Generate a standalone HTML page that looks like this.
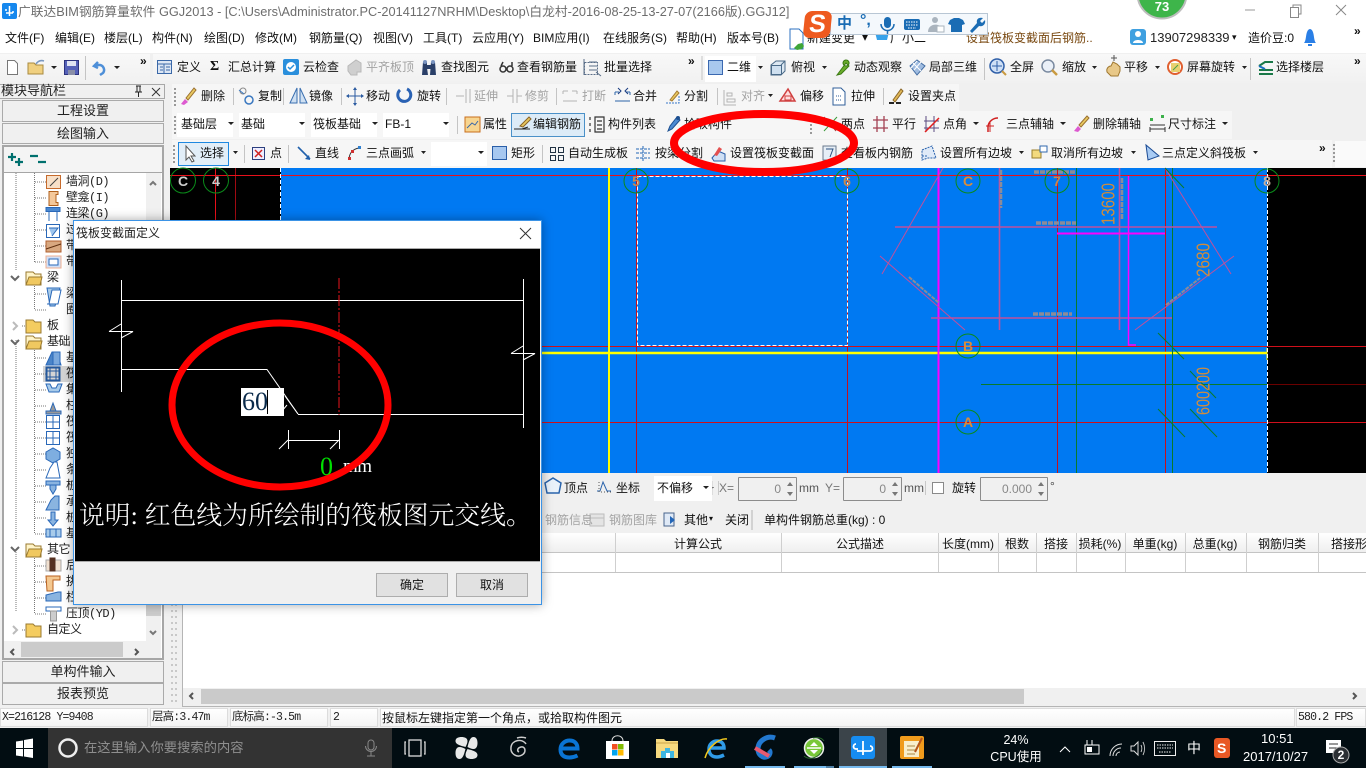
<!DOCTYPE html>
<html lang="zh"><head><meta charset="utf-8"><title>广联达BIM钢筋算量软件</title>
<style>
html,body{margin:0;padding:0;width:1366px;height:768px;overflow:hidden;background:#f0f0f0}
body{position:relative;font-family:"Liberation Sans","Noto Sans CJK SC",sans-serif;font-size:12px;color:#111}
div,span.t{position:absolute}
.t{position:absolute;white-space:nowrap;line-height:16px}
.g{color:#a3a3a3}
.b{position:absolute}
.tr{font-family:"Liberation Mono","Noto Sans CJK SC",monospace;font-size:12px;color:#222;letter-spacing:-.5px}
.st{font-family:"Liberation Mono","Noto Sans CJK SC",monospace;font-size:11.5px;color:#222;top:710px;letter-spacing:-.85px}
.c{transform:translateX(-50%)}
.cell{position:absolute;top:708px;height:19px;background:linear-gradient(#fff,#f4f4f4);border:1px solid #dcdcdc;box-sizing:border-box}
.pb{position:absolute;left:2px;width:162px;box-sizing:border-box;border:1px solid #aaa;background:#f0f0f0;text-align:center;line-height:20px;font-size:13px;color:#222}
.sp{position:absolute;height:24px;top:477px;box-sizing:border-box;border:1px solid #8c8c8c;background:#f0f0f0;border-radius:1px}
.sv{position:absolute;right:15px;top:3px;color:#888;line-height:16px}
.ar{position:absolute;right:3px;width:0;height:0;border-left:3px solid transparent;border-right:3px solid transparent}
.ar.u{top:4px;border-bottom:4px solid #777}.ar.d{bottom:4px;border-top:4px solid #777}
svg{position:absolute;overflow:visible}
</style></head><body>

<!-- title and menu -->
<div class="b" style="left:0;top:0;width:1366px;height:53px;background:#fff"></div>
<div class="t" style="left:18px;top:3px;font-size:12.75px;line-height:18px;color:#6d6d6d">广联达BIM钢筋算量软件 GGJ2013 - [C:\Users\Administrator.PC-20141127NRHM\Desktop\白龙村-2016-08-25-13-27-07(2166版).GGJ12]</div>

<!-- toolbar bands -->
<div class="b" style="left:0;top:54px;width:150px;height:29px;background:linear-gradient(#f8f8f8,#f1f1f1)"></div>
<div class="b" style="left:153px;top:54px;width:550px;height:29px;background:linear-gradient(#f8f8f8,#f1f1f1)"></div>
<div class="b" style="left:703px;top:54px;width:663px;height:29px;background:linear-gradient(#f8f8f8,#f1f1f1)"></div>
<div class="b" style="left:172px;top:84px;width:787px;height:27px;background:#f6f6f6"></div>
<div class="b" style="left:172px;top:111px;width:1060px;height:28px;background:#f6f6f6"></div>
<div class="b" style="left:172px;top:140px;width:1160px;height:28px;background:#f6f6f6"></div>
<div class="b" style="left:705px;top:56px;width:51px;height:26px;background:#fff"></div>
<div class="b" style="left:177px;top:113px;width:56px;height:24px;background:#fff"></div>
<div class="b" style="left:239px;top:113px;width:66px;height:24px;background:#fff"></div>
<div class="b" style="left:311px;top:113px;width:66px;height:24px;background:#fff"></div>
<div class="b" style="left:383px;top:113px;width:66px;height:24px;background:#fff"></div>
<div class="b" style="left:511px;top:113px;width:74px;height:24px;box-sizing:border-box;background:#dcebf7;border:1px solid #4a90c8"></div>
<div class="b" style="left:178px;top:142px;width:51px;height:24px;box-sizing:border-box;background:#e2eef8;border:1px solid #1e88e0"></div>
<div class="b" style="left:431px;top:142px;width:56px;height:24px;background:#fff"></div>
<div class="b" style="left:1335px;top:141px;width:31px;height:26px;background:#fafafa"></div>

<!-- left panel -->
<div class="b" style="left:0;top:84px;width:165px;height:15px;box-sizing:border-box;border:1px solid #a8a8a8;border-left:0;background:#f0f0f0"></div>
<div class="t" style="left:1px;top:83px;font-size:13px;color:#222">模块导航栏</div>
<div class="pb" style="top:100px;height:22px">工程设置</div>
<div class="pb" style="top:123px;height:21px">绘图输入</div>
<div class="b" style="left:2px;top:145px;width:162px;height:515px;box-sizing:border-box;border:2px solid #a6a6a6;background:#fff"></div>
<div class="b" style="left:4px;top:147px;width:158px;height:25px;background:#f4f4f4;border-bottom:1px solid #a6a6a6"></div>
<div class="b" style="left:146px;top:173px;width:15px;height:468px;background:#f0f0f0"></div>
<div class="b" style="left:146px;top:225px;width:15px;height:391px;background:#cdcdcd"></div>
<div class="b" style="left:4px;top:641px;width:157px;height:17px;background:#f0f0f0"></div>
<div class="b" style="left:21px;top:642px;width:102px;height:15px;background:#cbcbcb"></div>
<div class="pb" style="top:661px;height:22px">单构件输入</div>
<div class="pb" style="top:683px;height:22px">报表预览</div>

<div class="t tr" style="left:66px;top:174px">墙洞(D)</div>
<div class="t tr" style="left:66px;top:190px">壁龛(I)</div>
<div class="t tr" style="left:66px;top:206px">连梁(G)</div>
<div class="t tr" style="left:66px;top:222px">过梁</div>
<div class="t tr" style="left:66px;top:238px">带形</div>
<div class="t tr" style="left:66px;top:254px">带形</div>
<div class="t tr" style="left:47px;top:270px">梁</div>
<div class="t tr" style="left:66px;top:286px">梁</div>
<div class="t tr" style="left:66px;top:302px">圈</div>
<div class="t tr" style="left:47px;top:318px">板</div>
<div class="t tr" style="left:47px;top:334px">基础</div>
<div class="b" style="left:43px;top:366px;width:30px;height:16px;background:#d4d4d4"></div>
<div class="t tr" style="left:66px;top:350px">基</div>
<div class="t tr" style="left:66px;top:366px">筏</div>
<div class="t tr" style="left:66px;top:382px">集</div>
<div class="t tr" style="left:66px;top:398px">柱</div>
<div class="t tr" style="left:66px;top:414px">筏</div>
<div class="t tr" style="left:66px;top:430px">筏</div>
<div class="t tr" style="left:66px;top:446px">独</div>
<div class="t tr" style="left:66px;top:462px">条</div>
<div class="t tr" style="left:66px;top:478px">桩</div>
<div class="t tr" style="left:66px;top:494px">承</div>
<div class="t tr" style="left:66px;top:510px">桩</div>
<div class="t tr" style="left:66px;top:526px">基</div>
<div class="t tr" style="left:47px;top:542px">其它</div>
<div class="t tr" style="left:66px;top:558px">后</div>
<div class="t tr" style="left:66px;top:574px">挑</div>
<div class="t tr" style="left:66px;top:590px">栏</div>
<div class="t tr" style="left:66px;top:606px">压顶(YD)</div>
<div class="t tr" style="left:47px;top:622px">自定义</div>

<!-- splitter and lower area -->
<div class="b" style="left:183px;top:533px;width:1183px;height:155px;background:#fff"></div>
<div class="b" style="left:183px;top:533px;width:1183px;height:20px;background:linear-gradient(#fff,#efefef);border-bottom:1px solid #c4c4c4;box-sizing:border-box"></div>
<div class="b" style="left:183px;top:572px;width:1183px;height:1px;background:#c4c4c4"></div>
<div class="b" style="left:183px;top:688px;width:1183px;height:17px;background:#f0f0f0"></div>
<div class="b" style="left:201px;top:689px;width:823px;height:15px;background:#cacaca"></div>
<div class="b" style="left:183px;top:706px;width:1183px;height:1px;background:#b5b5b5"></div>
<div class="b" style="left:182px;top:533px;width:1px;height:174px;background:#b5b5b5"></div>
<div class="cell" style="left:0;width:148px"></div><div class="cell" style="left:150px;width:78px"></div><div class="cell" style="left:230px;width:98px"></div><div class="cell" style="left:330px;width:48px"></div><div class="cell" style="left:380px;width:915px"></div><div class="cell" style="left:1296px;width:70px"></div>

<!-- taskbar -->
<div class="b" style="left:0;top:728px;width:1366px;height:40px;background:#020d12"></div>
<div class="b" style="left:48px;top:728px;width:344px;height:40px;background:#333"></div>
<div class="b" style="left:839px;top:728px;width:48px;height:40px;background:#3b444a"></div>
<div class="b" style="left:745px;top:766px;width:40px;height:2px;background:#76b9ed"></div>
<div class="b" style="left:794px;top:766px;width:32px;height:2px;background:#76b9ed"></div>
<div class="b" style="left:826px;top:766px;width:8px;height:2px;background:#4f80a6"></div>
<div class="b" style="left:839px;top:766px;width:48px;height:2px;background:#76b9ed"></div>
<div class="b" style="left:892px;top:766px;width:40px;height:2px;background:#76b9ed"></div>

<!-- canvas and icons -->
<svg width="1366" height="768" style="left:0;top:0" viewBox="0 0 1366 768">
<rect x="170" y="168" width="1196" height="305" fill="#000"/>
<rect x="281" y="168" width="986" height="305" fill="#0079f2"/>
<g fill="none" stroke-width="1">
<path d="M215.500 168V473" stroke="#e8101a"/>
<path d="M235.500 168V473" stroke="#a00a12"/>
<path d="M636.500 168V473M847.500 168V473M1057.500 168V473M1165.500 168V473" stroke="#c80f1a"/>
<path d="M170 175.500H1366" stroke="#e8101a"/>
<path d="M170 346.500H1366M170 422.500H1366" stroke="#d0101a"/>
<path d="M609 168V473" stroke="#ff0" stroke-width="2"/><path d="M282 353H1267" stroke="#ff0" stroke-width="2.400"/><path d="M1267 348V360" stroke="#ff0"/>
<path d="M938.500 168V473" stroke="#f0f" stroke-width="2"/>
<path d="M1076.500 168V473M1172.500 168V473M981 384.500H1267" stroke="#0a7a2a"/><path d="M1267 384.500H1366" stroke="#6a0000"/>
<path d="M637.500 176.500H847.500V345.500H637.500Z M280.500 168V473M1267.500 168V473" stroke="#fff" stroke-dasharray="4 2"/>
<path d="M895 227H1217M931 318H1172M999.500 168V330M1119.500 168V330" stroke="#c0509c" stroke-width="1.600"/>
<path d="M943 168L882 274M1165 168L1231 274M880 256L965 330M1234 256L1135 330" stroke="#c0509c"/>
<path d="M1057 233.500H1165" stroke="#f0f" stroke-width="2"/><path d="M1128.500 176V345H1136" stroke="#f0f" stroke-width="1.500"/>
<path d="M1165 168L1184 188M1158 333L1184 359M1190 371L1216 398M1158 409L1185 437M1190 409L1217 437" stroke="#0a7a2a"/>
<path d="M1034 172H1076M1036 223H1076M1033 314H1072" stroke="#8b8b98" stroke-width="3.500" stroke-dasharray="5 1"/>
<path d="M1001 170V208M1122 178V220" stroke="#8b8b98" stroke-width="2.500" stroke-dasharray="5 1"/>
<path d="M909 277L939 303M1166 305L1200 278" stroke="#8b8b98" stroke-width="2" stroke-dasharray="4 1"/>
<g stroke="#0a8a1a"><circle cx="183" cy="180.500" r="12.500"/><circle cx="216" cy="180.500" r="12.500"/><circle cx="636" cy="181" r="12"/><circle cx="847" cy="181" r="12"/><circle cx="968" cy="181" r="12"/><circle cx="1057" cy="181" r="12"/><circle cx="1267" cy="181" r="12"/><circle cx="968" cy="346" r="12"/><circle cx="968" cy="422" r="12"/></g>
</g>
<g font-family="Liberation Sans" font-size="14" font-weight="bold" text-anchor="middle"><text x="183" y="186" fill="#ccc">C</text><text x="216" y="186" fill="#ccc">4</text><text x="636" y="186" fill="#c88850">5</text><text x="847" y="186" fill="#c88850">6</text><text x="968" y="186" fill="#d88c3c">C</text><text x="1057" y="186" fill="#c88850">7</text><text x="1267" y="186" fill="#c8b0a0">8</text><text x="968" y="351" fill="#d88c3c">B</text><text x="968" y="427" fill="#d88c3c">A</text></g>
<g font-family="Liberation Sans" font-size="18" fill="#d08c3c" text-anchor="middle"><text transform="translate(1114.500,204) rotate(-90)" textLength="42" lengthAdjust="spacingAndGlyphs">13600</text><text transform="translate(1209.500,260) rotate(-90)" textLength="34" lengthAdjust="spacingAndGlyphs">2680</text><text transform="translate(1209.500,391) rotate(-90)" textLength="48" lengthAdjust="spacingAndGlyphs">600200</text></g>

<!-- splitter dots -->
<path d="M172 400V704M176 400V704" stroke="#c8c8c8" stroke-width="2" stroke-dasharray="2 4" fill="none"/>

<!-- left panel icons -->
<path d="M136 86h5M137 86v6M140 86v6M135 92h7M138.500 92v5" stroke="#222" fill="none"/>
<path d="M152 88l8 8M160 88l-8 8" stroke="#333" fill="none"/>
<g stroke="#00706e" stroke-width="2.200" fill="none"><path d="M8 157h8M12 153v8M15 162h8M19 158v8M30 156h8M38 162h8"/></g>
<g stroke="#777" fill="none" stroke-dasharray="1 1"><path d="M16 173V270M16 340V540M16 550V612M34.500 173V262M34.500 286V310M34.500 350V534M34.500 558V614"/>
<path d="M35 182h11M35 198h11M35 214h11M35 230h11M35 246h11M35 262h11M35 294h11M35 310h11M35 358h11M35 374h11M35 390h11M35 406h11M35 422h11M35 438h11M35 454h11M35 470h11M35 486h11M35 502h11M35 518h11M35 534h11M35 566h11M35 582h11M35 598h11M35 614h11M22 326h4M22 630h4"/></g>
<g fill="none" stroke="#666" stroke-width="2"><path d="M11 276l4 4 4-4M11 340l4 4 4-4M11 547l4 4 4-4"/></g>
<g fill="none" stroke="#bbb" stroke-width="2"><path d="M13 322l4 4-4 4M13 626l4 4-4 4"/></g>
<g stroke="#9a7a30">
<path d="M26 272h7l2 2h6v11H26z M26 336h7l2 2h6v11H26z M26 544h7l2 2h6v11H26z" fill="#fff4c8"/><path d="M26 285l3-8h13l-2 8z M26 349l3-8h13l-2 8z M26 557l3-8h13l-2 8z" fill="#f0c860"/>
<path d="M26 320h7l2 2h6v11H26z M26 624h7l2 2h6v11H26z" fill="#f4cc60"/>
</g>
<!-- tree icons -->
<g fill="#fff" stroke="#2a68b8">
<rect x="46.500" y="175.500" width="14" height="13" stroke="#c66a2c" fill="#f8e0c8"/><path d="M50 186l8-8" stroke="#444"/>
<path d="M49 191.500h9v3h-2v8h2v3h-9z" stroke="#b0601c" fill="#f4c89a"/>
<path d="M46 207.500h14v4H46zM49 211v10M57 211v10" stroke="#2a68b8" fill="#4a88d0"/>
<path d="M46.500 224.500h13v13h-13z"/><path d="M49 228h9l-6 8" fill="#9cc4ee"/>
<rect x="46" y="241" width="15" height="11" stroke="#b06030" fill="#d8a880"/><path d="M46 249l15-5" stroke="#603010"/>
<rect x="46" y="256" width="15" height="12" stroke="#f0b090" fill="#d0e0f8"/><rect x="49" y="259" width="9" height="6"/>
<path d="M47 288h13l-5 18h-5z" fill="#a8cbea"/>
<path d="M49 304l3-14h9l-3 14z M47 304h11"/>
<path d="M46 365l6-13h5l4 13z" fill="#4a84c8"/><rect x="53" y="352" width="7" height="13" fill="#7aa8dc"/>
<rect x="46.500" y="367.500" width="13" height="13" fill="none" stroke="#24589c" stroke-width="2"/><path d="M46 371h14M46 377h14M50 367v14M56 367v14" stroke="#24589c"/>
<path d="M46 384h4l2 4h4l2-4h4l-3 8h-10z" fill="#a8cbea"/>
<path d="M46 411h15v3H46z M50 411l3-8 3 8z" fill="#999"/>
<rect x="46.500" y="415.500" width="13" height="13"/><path d="M46 422h14M53 415v14"/>
<rect x="46.500" y="431.500" width="13" height="13"/><path d="M46 438h14M53 431v14"/>
<path d="M46 452l7-4 7 4v7l-7 4-7-4z" fill="#7eaee0"/>
<path d="M46 478l4-10 4-6h3l3 16z"/>
<path d="M46 481h14v4H46zM50 485h6v4l-3 5-3-5z" fill="#8ab4e0"/>
<path d="M46 510l5-10 4-4h4v14z" fill="#8ab4e0"/>
<path d="M51 512h4v8h3l-5 6-5-6h3z" fill="#8ab4e0"/>
<path d="M46 529h15v8H46zM50 529v8M56 529v8" fill="#a8cbea"/>
<rect x="46" y="560" width="15" height="11" fill="#f0e0d0" stroke="#aaa"/><rect x="50" y="558" width="5" height="13" fill="#553020" stroke="#553020"/>
<path d="M46 576h14v4h-7v11h-6z" fill="#f4c890" stroke="#b86020"/>
<path d="M46 595l12-3h3v9H46z" fill="#8ab4e0"/>
<path d="M46 607h15v4H46z"/><rect x="50.500" y="611" width="6" height="10" fill="#ccc" stroke="#999"/>
</g>
<g fill="none" stroke="#777" stroke-width="2"><path d="M150 185l3-3 3 3M150 631l3 3 3-3"/><path d="M14 649l-3 3 3 3M135 649l3 3-3 3M193 693l-3 3 3 3M1353 693l3 3-3 3" stroke="#555"/></g>

<!-- row 1 icons -->
<path d="M7.500 60.500h7l3 3v11h-10z" fill="#fff" stroke="#777"/>
<path d="M28 63h6l2 2h7v9H28z" fill="#f0d080" stroke="#a88a40"/><path d="M36 64c2-3 5-4 8-3" fill="none" stroke="#7a98c0" stroke-width="1.500"/>
<rect x="64.500" y="60.500" width="14" height="14" fill="#5561b8" stroke="#2c327e"/><rect x="67" y="61" width="9" height="5" fill="#dfe3f2"/><rect x="68" y="70" width="7" height="5" fill="#8a8fa8"/>
<path d="M98 62l-4 4 4 2M95 65h5a5 5 0 0 1 3 8l-3 2" fill="none" stroke="#4e8fd8" stroke-width="2.500"/>
<g fill="#222"><path d="M51 66h6l-3 3zM114 66h6l-3 3zM758 66h5l-2.500 3zM822 66h5l-2.500 3zM1092 66h5l-2.500 3zM1155 66h5l-2.500 3zM1242 66h5l-2.500 3zM768 94h5l-2.500 3zM228 122h6l-3 3zM299 122h6l-3 3zM372 122h6l-3 3zM443 122h6l-3 3zM973 122h6l-3 3zM1060 122h6l-3 3zM1222 122h6l-3 3zM233 151h5l-2.500 3zM421 151h5l-2.500 3zM478 151h6l-3 3zM1019 151h5l-2.500 3zM1131 151h5l-2.500 3zM1253 151h5l-2.500 3zM708 487h6l-3 3"/></g>
<g stroke="#c4c4c4"><path d="M85.500 56v24M702 56v24M984.500 58v22M1250.500 58v22M233.500 88v17M283.500 88v17M341.500 88v17M446.500 88v17M556.500 88v17M717.500 88v17M883.500 88v17M457.500 116v18M244.500 145v18M288.500 145v18M542.500 145v18"/></g>
<g fill="none" stroke="#999" stroke-dasharray="2 2" stroke-width="2"><path d="M175 88V106M175 116V134M174 145V163M811 116V134M1334 144V164M660 482V500"/></g>
<rect x="157.500" y="60.500" width="14" height="13" fill="#dce6f4" stroke="#3a68a8"/><path d="M157 64h15M164 64v10M160 67h3M160 70h3M166 67h4M166 70h4" stroke="#3a68a8" fill="none"/>
<rect x="283" y="59" width="16" height="16" rx="2" fill="#2a8fdc"/><circle cx="291" cy="67" r="5" fill="#fff"/><path d="M288 67l2 2 4-4" stroke="#2a8fdc" fill="none" stroke-width="1.500"/>
<path d="M348 66l8-6 5 3v9h-4v3h-6l-3-4z" fill="#cfcfcf" stroke="#b8b8b8"/>
<path d="M423 62h4v6l1 7h-6zM431 62h4l1 13h-6zM427 65h4v4h-4z" fill="#2a3f68"/><circle cx="425" cy="62" r="2" fill="#7a94c0"/><circle cx="433" cy="62" r="2" fill="#7a94c0"/>
<g fill="none" stroke="#333" stroke-width="1.500"><circle cx="503" cy="69" r="3"/><circle cx="510" cy="69" r="3"/><path d="M501 66l2-4M512 66v-4"/></g>
<g fill="none" stroke="#5a6e88"><rect x="584.500" y="62.500" width="13" height="12" stroke-dasharray="2 1"/><path d="M584 59v16M589 62h8M589 66h8M589 70h8M596 72l5 4"/></g>
<rect x="708.500" y="60.500" width="14" height="14" fill="#a8c8ee" stroke="#3a68b0"/>
<path d="M771 65l5-4h9v10l-4 4h-10z" fill="#dde8f2" stroke="#4a6a88"/><rect x="771.500" y="65.500" width="10" height="9" fill="#cfe0f0" stroke="#4a6a88"/><path d="M781 65l4-4" stroke="#4a6a88"/>
<path d="M837 75l3-4 6-8 3 3-8 8zM846 60a3 3 0 1 0 .1 0" fill="#6cae2c" stroke="#3c7a14"/>
<path d="M910 66l7-6 8 6-8 9z" fill="#a0bce0" stroke="#446ea4"/><path d="M913 63l8 8M917 61l-6 7M921 62l-7 8" stroke="#fff" fill="none"/>
<circle cx="997" cy="66" r="7" fill="#cfe0f6" stroke="#2f5fa8" stroke-width="1.500"/><path d="M997 61v10M992 66h10" stroke="#2f5fa8"/><path d="M1002 71l4 4" stroke="#c99a40" stroke-width="2"/>
<circle cx="1048" cy="66" r="6" fill="#eaf0f8" stroke="#7a8aa0" stroke-width="1.500"/><path d="M1052 70l5 5" stroke="#c99a40" stroke-width="2.500"/>
<path d="M1107 72c-1-4 2-6 4-6l2-4 4 2 3 3v4l-2 5h-7z" fill="#e8c888" stroke="#a07830"/><path d="M1114 55v6M1111 58h6" stroke="#555" fill="none"/>
<circle cx="1175" cy="67" r="7" fill="#fff" stroke="#e06030" stroke-width="2"/><rect x="1171" y="63" width="9" height="9" fill="#e8d070"/><path d="M1173 70l5-5" stroke="#48a048"/>
<path d="M1259 66l6-4h8M1259 70h14M1259 74h14" stroke="#1a7848" stroke-width="2" fill="none"/><path d="M1259 66l6 3" stroke="#1a6ec0" stroke-width="2"/>

<!-- menu icons -->
<path d="M790 29h9l4 4v16h-13z" fill="#fff" stroke="#2c70c0"/><path d="M798 44l-4 4 3 2 5-1 2-3-2-3z" fill="#3fa63a"/>
<path d="M875 32h14l-2 8h-10z" fill="#37a2ea"/>
<rect x="1130" y="29" width="16" height="16" rx="3" fill="#3fa0e0"/><circle cx="1138" cy="34" r="3" fill="#fff"/><path d="M1133 43c0-4 10-4 10 0z" fill="#fff"/>
<path d="M1304 43c3-3 1-13 6-14 5 1 3 11 6 14z M1308 44h4v2h-4z" fill="#2a7fe6"/>

<!-- row 2 icons -->
<path d="M181 104l4-5 3 3-4 3z" fill="#dd5ad0"/><path d="M186 98l8-10 2 2-8 10z" fill="#e8c860" stroke="#9a7030"/>
<circle cx="243" cy="91" r="3" fill="none" stroke="#888"/><circle cx="249" cy="100" r="4" fill="none" stroke="#3a78c0" stroke-width="1.500"/><path d="M239 90l5 4" stroke="#3a78c0"/>
<path d="M297 88l-7 15h7z M300 88l7 15h-7z" fill="#cfe0f2" stroke="#3a6fb0"/>
<path d="M355 88v17M347 96h16" stroke="#2a5aa0" fill="none"/><path d="M355 87l-2 3h4zM355 106l-2-3h4zM346 96l3-2v4zM364 96l-3-2v4z" fill="#2a5aa0"/>
<path d="M400 90a6.500 6.500 0 1 0 7-1" fill="none" stroke="#2a62b4" stroke-width="3"/>
<g stroke="#b4b4b4" fill="none"><path d="M456 96h8M466 89v14M470 89v14"/><path d="M507 96h6M517 96h5M513 89v14M517 89v14"/><path d="M563 91h5M572 91h5M563 101h14M563 91v3M577 91v3"/><path d="M724 90v15h12M727 93h5v3h-5zM727 99h8v3h-8z"/></g>
<g stroke="#2c64a8" fill="none"><path d="M615 92h4M626 92h4M615 101h15M615 92v3M630 92v3" /><path d="M618 88l3 3-3 3M628 88l-3 3 3 3" stroke="#1a3c80"/></g>
<path d="M666 103h13v-7" fill="none" stroke="#3a78c8" stroke-dasharray="2 1"/><path d="M670 100l7-9 2 2-7 8z" fill="#e8c860" stroke="#a47a30"/>
<path d="M788 89l7 12h-15z" fill="#fdd" stroke="#d04040" stroke-width="1.500"/><rect x="785" y="96" width="6" height="4" fill="none" stroke="#d04040"/>
<path d="M833 88h8l4 4v13h-12z" fill="#fff" stroke="#305f99"/><path d="M836 96h6M836 100h6" stroke="#305f99" stroke-dasharray="1 1"/>
<path d="M889 103h5M896 103h5" stroke="#222" stroke-width="2"/><path d="M893 100l8-11 2 2-8 11z" fill="#e0b858" stroke="#8a6628"/>

<!-- row 3 icons -->
<rect x="465" y="117" width="15" height="15" fill="#f7d590" stroke="#c86e1c"/><path d="M467 128l5-5 3 2 3-4" stroke="#3a68a8" fill="none"/>
<path d="M514 129h8l6-2M515 129h15" stroke="#222" fill="none"/><path d="M520 126l9-9 2 2-8 8z" fill="#e8c860" stroke="#8a6428"/>
<path d="M590 117v3M590 123v3M590 129v3M595 117h9v15h-9zM597 121h5M597 125h5M597 129h5" stroke="#333" fill="none" stroke-width="1.200"/>
<path d="M668 131l2-5 7-9 3 3-8 9z" fill="#4b8ad2" stroke="#1c4f90"/><circle cx="678" cy="118" r="2" fill="#1c4f90"/>
<path d="M824 131l13-14" stroke="#3a9a3a"/><path d="M824 117l12 14" stroke="#a34040"/>
<path d="M873 120h15M873 128h15M877 116v16M884 116v16" stroke="#a34052" fill="none" stroke-width="1.300"/>
<path d="M926 116v16M934 116v16M924 121h15M924 128h15" stroke="#5a4a80" fill="none"/><path d="M925 132l14-14" stroke="#e02020" stroke-width="1.500"/>
<path d="M988 132v-6a10 10 0 0 1 10-8" stroke="#d02020" fill="none" stroke-width="1.500"/><path d="M986 126h8M990 122v10" stroke="#d02020"/>
<path d="M1074 131l4-5 3 3-3 3z" fill="#dd5ad0"/><path d="M1079 125l8-9 2 2-8 9z" fill="#e8c860" stroke="#9a7030"/>
<path d="M1150 125h15M1150 129h15M1150 127v5M1165 127v5" stroke="#333" fill="none"/><rect x="1150" y="118" width="3" height="3" fill="#3cb04a"/><rect x="1161" y="115" width="3" height="3" fill="#3cb04a"/>

<!-- row 4 icons -->
<path d="M186 146v14l3-3 3 5 2-1-3-5h4z" fill="#fff" stroke="#555"/>
<rect x="252.500" y="147.500" width="12" height="12" fill="#eef" stroke="#2c3f7f"/><path d="M255 150l7 7M262 150l-7 7" stroke="#d02020" stroke-width="1.500"/>
<path d="M298 147l12 12" stroke="#2160ac" stroke-width="1.600"/><path d="M310 160l-5-1 4-4z" fill="#2160ac"/>
<path d="M349 160c0-7 4-11 10-12" stroke="#333" fill="none"/><rect x="348" y="157" width="3" height="3" fill="#d03030"/><rect x="358" y="146" width="3" height="3" fill="#3080d0"/><rect x="351" y="150" width="3" height="3" fill="#d03030"/>
<rect x="492.500" y="146.500" width="14" height="13" fill="#a7c8f0" stroke="#2a5ea8"/>
<g fill="none" stroke="#234"><rect x="550.500" y="147.500" width="5" height="5"/><rect x="558.500" y="147.500" width="5" height="5"/><rect x="550.500" y="155.500" width="5" height="5"/><rect x="558.500" y="155.500" width="5" height="5"/></g>
<path d="M636 149h14M636 153h14M636 158h14M643 146v15" stroke="#2166b6" fill="none" stroke-dasharray="3 1"/>
<path d="M712 158l6-7 7 3v7h-11z" fill="#cfe0f5" stroke="#2a5ea8"/><path d="M714 155l5-8 3 2-5 7z" fill="#e45050"/>
<rect x="823" y="146" width="13" height="14" fill="#e6eef6" stroke="#6a7a8e"/><path d="M826 149h7l-3 8" stroke="#2a5080" fill="none"/>
<path d="M922 150l10-4 4 12h-8l-6 2zM922 156h6" fill="#dfeaf8" stroke="#2a62ac" stroke-dasharray="2 1"/>
<path d="M1032 150h9v8h-9z" fill="#f3da7e" stroke="#9a7f2c"/><path d="M1040 146h7v6h-7z" fill="#fff" stroke="#3268ad"/>
<path d="M1146 145l2 15 11-4z" fill="#a8cbf4" stroke="#1b4b94"/>

<!-- bottom row icons -->
<path d="M545 483l8-5 8 5-2 10h-12z" fill="#eaf2fa" stroke="#2a64ac" stroke-width="1.500"/>
<path d="M597 491h3l3-9 4 9h4" stroke="#2a64ac" fill="none"/><path d="M599 482v10h13" stroke="#555" fill="none" stroke-dasharray="1 2"/>
<rect x="932.500" y="482.500" width="11" height="11" fill="#fff" stroke="#8a8a8a"/>
<path d="M590 514h14v12h-14zM590 518h14" fill="#e4e4e4" stroke="#bdbdbd"/>
<path d="M664 513h10v13h-10z" fill="#dfe9f6" stroke="#47648c"/><path d="M670 516l5 4-5 4z" fill="#2266b8"/>
<path d="M752 510v20" stroke="#b5b5b5"/>
<g stroke="#c8c8c8"><path d="M712 481v14M718.500 481v14M925.500 481v14"/></g>

<!-- table lines -->
<path d="M615.500 533V572M781.500 533V572M938.500 533V572M998.500 533V572M1036.500 533V572M1076.500 533V572M1125.500 533V572M1185.500 533V572M1246.500 533V572M1318.500 533V572" stroke="#cfcfcf"/>

<!-- task bar icons -->
<path d="M16 741.500l7-1V748h-7zM24 740l9-1.500V748h-9zM16 749h7v7.500l-7-1zM24 749h9v9l-9-1.500z" fill="#fff"/>
<circle cx="68" cy="748" r="8.500" fill="none" stroke="#eee" stroke-width="2.500"/>
<g fill="none" stroke="#888"><rect x="368" y="740" width="6" height="10" rx="3"/><path d="M365.500 746a5.500 5.500 0 0 0 11 0M371 752v4M367 756h8"/></g>
<g fill="none" stroke="#ddd" stroke-width="1.300"><rect x="409" y="740" width="12" height="16"/><path d="M406 742h-1v12h1M424 742h1v12h-1"/></g>
<g fill="#e8e8e8"><path id="bl" d="M465.500 747c-3-1-10-2-10-6 0-3 3-4 6-4 3 0 6 1 6 4 0 2-1 4-2 6z"/><path d="M467.500 747c1-3 2-10 6-10 3 0 4 3 4 6 0 3-1 6-4 6-2 0-4-1-6-2z"/><path d="M467.500 749c3 1 10 2 10 6 0 3-3 4-6 4-3 0-6-1-6-4 0-2 1-4 2-6z"/><path d="M465.500 749c-1 3-2 10-6 10-3 0-4-3-4-6 0-3 1-6 4-6 2 0 4 1 6 2z"/></g>
<path d="M526 744c-4-6-14-4-15 3s6 11 11 8 3-9-1-8-4 4-2 5M517 738c3-1 6-1 9 0" fill="none" stroke="#cdcdcd" stroke-width="1.500"/>
<path d="M560.500 748.500h17c0-6-4-8-8-8s-9 3-9 9 4 8 9 8c3 0 6-1 8-2" fill="none" stroke="#0a74d4" stroke-width="4"/>
<rect x="606" y="741" width="23" height="18" fill="#fff"/><path d="M612 741c0-7 11-7 11 0" stroke="#ddd" fill="none"/><rect x="612" y="744" width="5.500" height="5.500" fill="#f25022"/><rect x="618" y="744" width="5.500" height="5.500" fill="#7fba00"/><rect x="612" y="750" width="5.500" height="5.500" fill="#00a4ef"/><rect x="618" y="750" width="5.500" height="5.500" fill="#ffb900"/>
<path d="M656 739h8l2 2h12v17h-22z" fill="#f6d97f"/><path d="M656 743h22" stroke="#caa44a"/><path d="M661 758v-7h4v-3h5v3h4v7z" fill="#3fb5e0"/><rect x="666" y="753" width="4" height="5" fill="#fff"/>
<path d="M708.500 748h15.500c0-5-3-7-7-7s-8 3-8 8 3 8 8 8c3 0 5-1 7-2" fill="none" stroke="#2f9be8" stroke-width="3.500"/><path d="M705 758c3-11 14-20 22-19" fill="none" stroke="#f2c81f" stroke-width="1.500"/>
<path d="M775 738c-8-3-17 3-17 11 0 6 5 9 8 8 4-1 5-5 3-7" fill="none" stroke="#2278cf" stroke-width="5"/><path d="M755 748l14 8" stroke="#e85a70" stroke-width="4"/>
<circle cx="814" cy="748" r="9.500" fill="#79c83a" stroke="#eee" stroke-width="1.500"/><path d="M807 748h14" stroke="#fff" stroke-width="1.500"/><path d="M810 746l4-4 4 4zM810 750l4 4 4-4z" fill="#fff"/><path d="M804 756c6 5 16 1 18-6M813 738c5-1 9 0 11 3" fill="none" stroke="#2a6a2a"/>
<rect x="851" y="736" width="24" height="23" rx="3" fill="#168cf0"/><path d="M863 741v14M858 749h-2a2.500 2.500 0 0 1 0-5M868 751h2a2.500 2.500 0 0 0 0-5M857 751h12" stroke="#fff" stroke-width="1.800" fill="none"/>
<rect x="900" y="736" width="24" height="23" rx="2" fill="#f09b1c"/><rect x="904" y="741" width="15" height="16" fill="#f8eecc"/><path d="M907 746h8M907 750h8M907 754h8" stroke="#aa8844"/><path d="M915 752l7-14" stroke="#b6561a" stroke-width="2"/>
<path d="M1060 752l5-5 5 5" stroke="#fff" fill="none"/>
<rect x="1085" y="745" width="14" height="9" fill="none" stroke="#fff"/><rect x="1087" y="747" width="5" height="5" fill="#fff"/><path d="M1087 745v-5M1092 745v-5" stroke="#fff"/>
<path d="M1110 756a12 12 0 0 1 12-12M1113 756a8 8 0 0 1 8-8M1116 756a4 4 0 0 1 4-4" stroke="#ddd" fill="none"/>
<path d="M1131 746h3l4-4v13l-4-4h-3z" fill="none" stroke="#ddd"/><path d="M1141 745c1 2 1 5 0 7M1143 742c2 4 2 9 0 13" stroke="#ccc" fill="none"/>
<rect x="1154.500" y="741.500" width="21" height="14" fill="none" stroke="#eee"/><path d="M1157 745h16M1157 748h16M1159 752h12" stroke="#eee" stroke-dasharray="1.500 1"/>
<rect x="1214" y="738" width="16" height="20" rx="3" fill="#e85825"/>
<path d="M1326 740h15v13h-15z" fill="#fff"/><path d="M1329 744h9M1329 748h9" stroke="#333"/>
<circle cx="1341" cy="755" r="8" fill="#2b2f33" stroke="#aaa"/>

<!-- top right -->
<circle cx="1162" cy="-6" r="24.500" fill="#3eb54a" stroke="#bdbdbd" stroke-width="2"/>
<path d="M1245 10h10" stroke="#999"/><path d="M1290.500 7.500h8v10h-8zM1293 7V5h8v9h-2" fill="none" stroke="#888"/><path d="M1336 5l10 10M1346 5l-10 10" stroke="#888" fill="none"/>

<!-- title app icon -->
<rect x="2" y="3" width="15" height="16" rx="2" fill="#1688ee"/><path d="M9.500 6v10M5 10h2M12 12h2M6 13h7" stroke="#fff" stroke-width="1.500" fill="none"/>
</svg>

<!-- top toolbar texts -->
<div class="t" style="left:5px;top:30px">文件(F)</div><div class="t" style="left:55px;top:30px">编辑(E)</div><div class="t" style="left:104px;top:30px">楼层(L)</div><div class="t" style="left:152px;top:30px">构件(N)</div><div class="t" style="left:204px;top:30px">绘图(D)</div><div class="t" style="left:255px;top:30px">修改(M)</div><div class="t" style="left:309px;top:30px">钢筋量(Q)</div><div class="t" style="left:373px;top:30px">视图(V)</div><div class="t" style="left:423px;top:30px">工具(T)</div><div class="t" style="left:472px;top:30px">云应用(Y)</div><div class="t" style="left:533px;top:30px">BIM应用(I)</div><div class="t" style="left:603px;top:30px">在线服务(S)</div><div class="t" style="left:676px;top:30px">帮助(H)</div><div class="t" style="left:727px;top:30px">版本号(B)</div>
<div class="t" style="left:807px;top:30px">新建变更</div><div class="t" style="left:862px;top:29px">▾</div><div class="t" style="left:890px;top:30px">广小二</div>
<div class="t" style="left:966px;top:30px;color:#7a4a12">设置筏板变截面后钢筋..</div>
<div class="t" style="left:1150px;top:30px;font-size:13px;color:#222">13907298339</div><div class="t" style="left:1232px;top:29px;font-size:9px">▾</div><div class="t" style="left:1248px;top:30px">造价豆:0</div>
<div class="t" style="left:1354px;top:23px;font-weight:bold">»</div><div class="t" style="left:140px;top:53px;font-weight:bold">»</div><div class="t" style="left:688px;top:53px;font-weight:bold">»</div><div class="t" style="left:1354px;top:53px;font-weight:bold">»</div><div class="t" style="left:1319px;top:140px;font-weight:bold">»</div>

<div class="t" style="left:177px;top:59px">定义</div><div class="t" style="left:210px;top:59px;font:bold 14px/16px 'Liberation Serif',serif">Σ</div><div class="t" style="left:228px;top:59px">汇总计算</div><div class="t" style="left:303px;top:59px">云检查</div><div class="t g" style="left:366px;top:59px">平齐板顶</div><div class="t" style="left:441px;top:59px">查找图元</div><div class="t" style="left:517px;top:59px">查看钢筋量</div><div class="t" style="left:604px;top:59px">批量选择</div>
<div class="t" style="left:727px;top:59px">二维</div><div class="t" style="left:791px;top:59px">俯视</div><div class="t" style="left:854px;top:59px">动态观察</div><div class="t" style="left:929px;top:59px">局部三维</div><div class="t" style="left:1010px;top:59px">全屏</div><div class="t" style="left:1062px;top:59px">缩放</div><div class="t" style="left:1124px;top:59px">平移</div><div class="t" style="left:1187px;top:59px">屏幕旋转</div><div class="t" style="left:1276px;top:59px">选择楼层</div>

<div class="t" style="left:201px;top:88px">删除</div><div class="t" style="left:258px;top:88px">复制</div><div class="t" style="left:309px;top:88px">镜像</div><div class="t" style="left:366px;top:88px">移动</div><div class="t" style="left:417px;top:88px">旋转</div><div class="t g" style="left:474px;top:88px">延伸</div><div class="t g" style="left:525px;top:88px">修剪</div><div class="t g" style="left:582px;top:88px">打断</div><div class="t" style="left:633px;top:88px">合并</div><div class="t" style="left:684px;top:88px">分割</div><div class="t g" style="left:741px;top:88px">对齐</div><div class="t" style="left:800px;top:88px">偏移</div><div class="t" style="left:851px;top:88px">拉伸</div><div class="t" style="left:908px;top:88px">设置夹点</div>

<div class="t" style="left:181px;top:116px">基础层</div><div class="t" style="left:241px;top:116px">基础</div><div class="t" style="left:313px;top:116px">筏板基础</div><div class="t" style="left:385px;top:116px">FB-1</div><div class="t" style="left:483px;top:116px">属性</div><div class="t" style="left:533px;top:116px">编辑钢筋</div><div class="t" style="left:608px;top:116px">构件列表</div><div class="t" style="left:684px;top:116px">拾取构件</div><div class="t" style="left:841px;top:116px">两点</div><div class="t" style="left:892px;top:116px">平行</div><div class="t" style="left:943px;top:116px">点角</div><div class="t" style="left:1006px;top:116px">三点辅轴</div><div class="t" style="left:1093px;top:116px">删除辅轴</div><div class="t" style="left:1168px;top:116px">尺寸标注</div>

<div class="t" style="left:200px;top:145px">选择</div><div class="t" style="left:270px;top:145px">点</div><div class="t" style="left:315px;top:145px">直线</div><div class="t" style="left:366px;top:145px">三点画弧</div><div class="t" style="left:511px;top:145px">矩形</div><div class="t" style="left:568px;top:145px">自动生成板</div><div class="t" style="left:655px;top:145px">按梁分割</div><div class="t" style="left:730px;top:145px">设置筏板变截面</div><div class="t" style="left:841px;top:145px">查看板内钢筋</div><div class="t" style="left:940px;top:145px">设置所有边坡</div><div class="t" style="left:1051px;top:145px">取消所有边坡</div><div class="t" style="left:1162px;top:145px">三点定义斜筏板</div>

<!-- lower rows text -->
<div class="t" style="left:564px;top:480px">顶点</div><div class="t" style="left:616px;top:480px">坐标</div>
<div class="b" style="left:654px;top:476px;width:58px;height:25px;background:#fff"></div><div class="t" style="left:657px;top:480px">不偏移</div>
<svg width="8" height="5" style="left:703px;top:486px"><path d="M0 0h6l-3 3z" fill="#222"/></svg>
<div class="t g" style="left:719px;top:480px;color:#777">X=</div>
<div class="sp" style="left:738px;width:59px"><span class="sv">0</span><i class="ar u"></i><i class="ar d"></i></div>
<div class="t" style="left:799px;top:480px;color:#555">mm</div><div class="t" style="left:825px;top:480px;color:#777">Y=</div>
<div class="sp" style="left:843px;width:59px"><span class="sv">0</span><i class="ar u"></i><i class="ar d"></i></div>
<div class="t" style="left:904px;top:480px;color:#555">mm</div><div class="t" style="left:952px;top:480px">旋转</div>
<div class="sp" style="left:980px;width:68px"><span class="sv">0.000</span><i class="ar u"></i><i class="ar d"></i></div>
<div class="t" style="left:1050px;top:478px;color:#444">°</div>

<div class="t g" style="left:545px;top:512px">钢筋信息</div><div class="t g" style="left:609px;top:512px">钢筋图库</div><div class="t" style="left:684px;top:512px">其他</div><div class="t" style="left:709px;top:511px;font-size:8px">▾</div><div class="t" style="left:725px;top:512px">关闭</div><div class="t" style="left:764px;top:512px">单构件钢筋总重(kg) : 0</div>

<div class="t c" style="left:698px;top:536px">计算公式</div><div class="t c" style="left:860px;top:536px">公式描述</div><div class="t c" style="left:968px;top:536px">长度(mm)</div><div class="t c" style="left:1017px;top:536px">根数</div><div class="t c" style="left:1056px;top:536px">搭接</div><div class="t c" style="left:1100px;top:536px">损耗(%)</div><div class="t c" style="left:1155px;top:536px">单重(kg)</div><div class="t c" style="left:1215px;top:536px">总重(kg)</div><div class="t c" style="left:1282px;top:536px">钢筋归类</div><div class="t" style="left:1331px;top:536px">搭接形</div>

<!-- status -->
<div class="t st" style="left:2px">X=216128 Y=9408</div><div class="t st" style="left:152px">层高:3.47m</div><div class="t st" style="left:232px">底标高:-3.5m</div><div class="t st" style="left:333px">2</div><div class="t" style="left:382px;top:710px">按鼠标左键指定第一个角点，或拾取构件图元</div><div class="t st" style="left:1298px">580.2 FPS</div>

<!-- taskbar text -->
<div class="t" style="left:84px;top:740px;font-size:13.300px;color:#8f8f8f">在这里输入你要搜索的内容</div>
<div class="t c" style="left:1016px;top:732px;color:#fff;font-size:12.500px">24%</div><div class="t c" style="left:1016px;top:749px;color:#fff;font-size:12.500px">CPU使用</div>
<div class="t" style="left:1187px;top:740px;color:#fff;font-size:14px">中</div><div class="t" style="left:1217px;top:740px;color:#fff;font-size:14px;font-weight:bold">S</div>
<div class="t" style="left:1261px;top:731px;color:#fff;font-size:13px">10:51</div><div class="t" style="left:1243px;top:749px;color:#fff;font-size:13px">2017/10/27</div>
<div class="t c" style="left:1341px;top:747px;color:#fff;font-size:12px;font-weight:bold">2</div>
<div class="t c" style="left:1162px;top:-1px;color:#fff;font-size:13px;font-weight:bold">73</div>

<!-- sogou bar -->
<div class="b" style="left:830px;top:13px;width:158px;height:22px;box-sizing:border-box;background:#f4f8fc;border:1px solid #b8c6d4"></div>
<div class="b" style="left:804px;top:11px;width:27px;height:27px;border-radius:7px;background:#ee5a1f;color:#fff;font:bold 25px/27px 'Liberation Sans',sans-serif;text-align:center;transform:skewX(-6deg)">S</div>
<div class="t" style="left:837px;top:15px;font-size:15px;line-height:18px;color:#1a6cb4;font-weight:bold">中</div>
<div class="t" style="left:860px;top:12px;font-size:16px;line-height:18px;color:#1a6cb4;font-weight:bold">°,</div>
<svg width="1366" height="60" style="left:0;top:0">
<rect x="884" y="17" width="7" height="11" rx="3.500" fill="#1a6cb4"/><path d="M881 24a6 6 0 0 0 13 0M887.500 30v4" stroke="#1a6cb4" stroke-width="1.500" fill="none"/>
<rect x="904" y="19" width="16" height="11" rx="2" fill="#1a6cb4"/><path d="M906 22h12M906 25h12M908 28h8" stroke="#fff" stroke-dasharray="1.500 1"/>
<circle cx="935" cy="20" r="3" fill="#aab4be"/><path d="M928 32c0-9 12-9 13-4v4z" fill="#aab4be"/><rect x="937" y="26" width="7" height="6" fill="#fff" stroke="#aab4be"/>
<path d="M950 20l4-2h5l4 2 2 4-3 1v7h-11v-7l-3-1z" fill="#1a6cb4"/>
<path d="M970 31l7-8c-1-4 2-6 6-5l-3 3 2 2 3-3c1 4-2 7-6 6l-7 7z" fill="#1a6cb4"/>
</svg>

<!-- dialog -->
<div class="b" style="left:73px;top:220px;width:469px;height:385px;box-sizing:border-box;background:#f0f0f0;border:1px solid #3b93e6;box-shadow:0 0 10px rgba(0,0,0,.35)">
<div class="b" style="left:0;top:0;width:467px;height:27px;background:#fff"></div>
<div class="t" style="left:2px;top:4px;color:#222">筏板变截面定义</div>
<div class="b" style="left:1px;top:27px;width:465px;height:314px;box-sizing:border-box;background:#000;border-top:1px solid #aaa;border-bottom:1px solid #aaa"></div>
<div class="b" style="left:302px;top:352px;width:72px;height:24px;box-sizing:border-box;background:#e1e1e1;border:1px solid #adadad;text-align:center;line-height:22px;color:#111">确定</div>
<div class="b" style="left:382px;top:352px;width:72px;height:24px;box-sizing:border-box;background:#e1e1e1;border:1px solid #adadad;text-align:center;line-height:22px;color:#111">取消</div>
</div>
<svg width="1366" height="768" style="left:0;top:0">
<path d="M520 228l11 11M531 228l-11 11" stroke="#333" fill="none"/>
<g stroke="#fff" fill="none">
<path d="M121.500 280V392M523.500 279V428M121 300.500H524M121 369.500H267L298 414M298 414.500H524"/>
<path d="M109 331.500H133L121 338M109 331.500L121 324M511 353.500H535L523 360M511 353.500L523 346"/>
<path d="M285 396L298 414M287 405L282 411"/>
<path d="M288.500 430V449M339.500 430V449M288 440.500H339M279 449L288 440M330 449L339 440"/>
</g>
<path d="M339 278V415" stroke="#e8141c" stroke-dasharray="11 2 2 2" fill="none"/>
</svg>
<div class="b" style="left:241px;top:388px;width:43px;height:28px;background:#fff"></div>
<div class="t" style="left:242px;top:388px;font:26px/28px 'Liberation Serif',serif;color:#0a2a4a">60</div>
<div class="b" style="left:267px;top:390px;width:1px;height:24px;background:#000"></div>
<div class="t" style="left:320px;top:453px;font:26px/28px 'Liberation Serif',serif;color:#00e000">0</div>
<div class="t" style="left:343px;top:456px;font:19px/22px 'Liberation Serif',serif;color:#fff;letter-spacing:-.5px">mm</div>
<div class="t" style="left:79px;top:500px;font:25.800px/32px 'Liberation Serif','Noto Serif CJK SC',serif;color:#fff;font-weight:300;white-space:pre">说明<span style="letter-spacing:7px">:</span>红色线为所绘制的筏板图元交线。</div>

<!-- red annotations -->
<svg width="1366" height="768" style="left:0;top:0">
<ellipse cx="280" cy="405" rx="108" ry="82" fill="none" stroke="#f00" stroke-width="7"/>
<ellipse cx="764" cy="143" rx="90" ry="29" fill="none" stroke="#f00" stroke-width="8"/>
</svg>
</body></html>
